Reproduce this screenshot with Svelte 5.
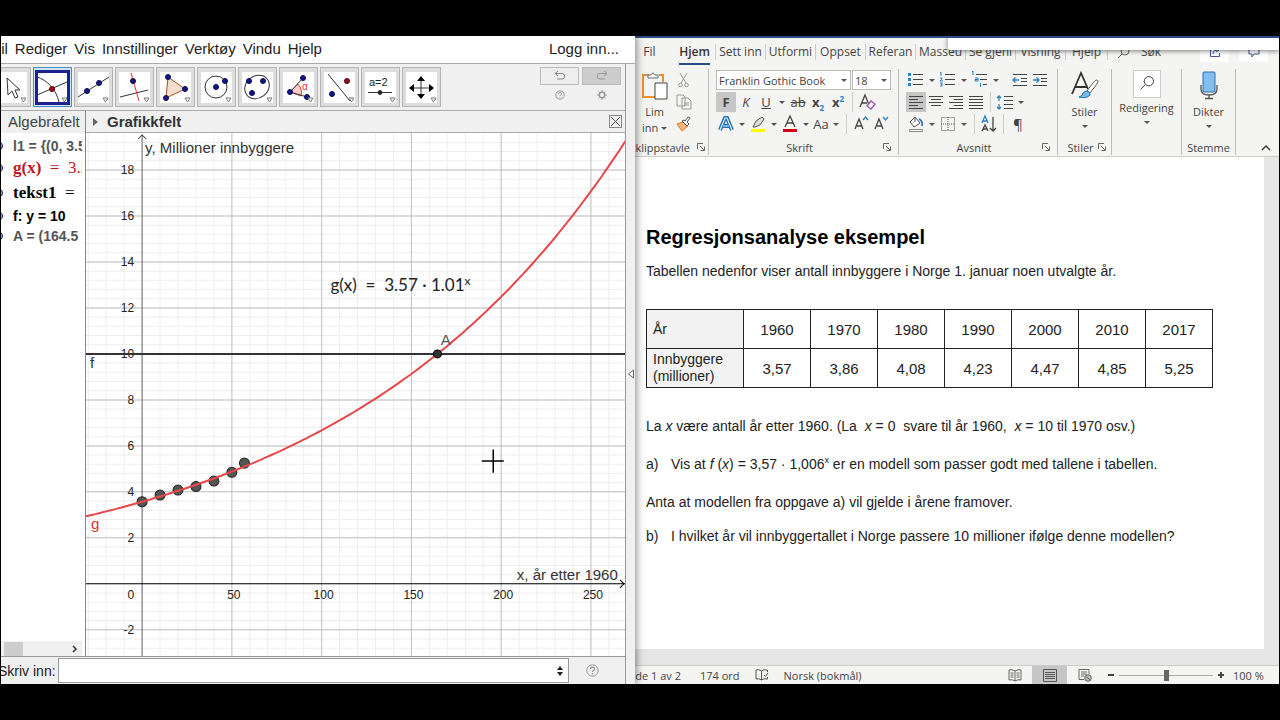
<script>
  const menus = ['Fil', 'Rediger', 'Vis', 'Innstillinger', 'Verktøy', 'Vindu', 'Hjelp']
  const tools = ['move', 'intersect', 'line', 'perpendicular', 'polygon', 'circle', 'ellipse', 'angle', 'reflect', 'slider', 'pan']
  const toolNames = {
    move: 'Flytt', intersect: 'Skjæring', line: 'Linje', perpendicular: 'Normal', polygon: 'Mangekant',
    circle: 'Sirkel', ellipse: 'Ellipse', angle: 'Vinkel', reflect: 'Speil', slider: 'Glider', pan: 'Flytt grafikkfelt',
  }
  let activeTool = $state('intersect')
  let command = $state('')
  let zoom = $state(100)

  // graph
  const W = 538
  const H = 523
  const ox = 56
  const oy = 450
  const px = x => ox + x * 1.792
  const py = y => oy - y * 22.95
  const g = x => 3.57 * Math.exp(0.00626 * x)

  const range = (from, to, step) => {
    const out = []
    for (let i = from; i <= to; i++) out.push(i * step)
    return out
  }
  const minorX = range(-3, 26, 10)
  const minorY = range(-7, 48, 0.4)
  const majorX = [50, 100, 150, 200, 250]
  const majorY = [-2, 2, 4, 6, 8, 10, 12, 14, 16, 18]
  const curve = range(-16, 135, 2).map(x => `${px(x).toFixed(1)},${py(g(x)).toFixed(1)}`).join(' ')

  const population = [
    { year: 1960, value: 3.57 }, { year: 1970, value: 3.86 }, { year: 1980, value: 4.08 },
    { year: 1990, value: 4.23 }, { year: 2000, value: 4.47 }, { year: 2010, value: 4.85 },
    { year: 2017, value: 5.25 },
  ]
  const norsk = n => n.toFixed(2).replace('.', ',')

  const tabs = ['Sett inn', 'Utformi', 'Oppset', 'Referan', 'Masseu', 'Se gjeni', 'Visning', 'Hjelp']
</script>

{#snippet caret()}
  <svg class="caret" width="12" height="20" viewBox="0 0 12 20"><path d="M3 9h6l-3 3z" fill="#555" /></svg>
{/snippet}

{#snippet launcher()}
  <button class="launcher" aria-label="Flere valg">
    <svg width="8" height="8" viewBox="0 0 8 8" fill="none" stroke="#666"><path d="M.5 6V.5H6M3 3l4 4M7.500 3.500v4h-4" /></svg>
  </button>
{/snippet}

{#snippet lines(widths, anchor)}
  <svg width="20" height="20" viewBox="0 0 20 20" stroke="#444" fill="none">
    {#each widths as w, i}
      {@const x = anchor === 'left' ? 3 : anchor === 'right' ? 17 - w : 10 - w / 2}
      <path d="M{x} {4.5 + i * 3}h{w}" />
    {/each}
  </svg>
{/snippet}

<div class="screen">
  <section class="geogebra">
    <nav class="menubar">
      <div class="menus">
        {#each menus as menu}<button>{menu}</button>{/each}
      </div>
      <button>Logg inn...</button>
    </nav>

    <div class="workspace">
      <div class="main">
        <div class="toolbar">
          <div class="tools">
            {#each tools as tool}
              <button class="tool" class:active={activeTool === tool} aria-label={toolNames[tool]} onclick={() => activeTool = tool}>
                <svg viewBox="0 0 31 31" width="31" height="31" fill="none" stroke="#333">
                  {#if tool === 'move'}
                    <path d="M11 6l1 17 4-4 3 7 3-1-3-7h5z" fill="#fff" />
                  {:else if tool === 'intersect'}
                    <path d="M0 5c10 3 19 12 22 25M0 23l30-13" />
                    <circle cx="15" cy="17" r="2.500" fill="#a01020" stroke="#600" />
                  {:else if tool === 'line'}
                    <path d="M0 25L31 5" /><circle cx="9" cy="19" r="2.500" class="dot" /><circle cx="21" cy="11" r="2.500" class="dot" />
                  {:else if tool === 'perpendicular'}
                    <path d="M1 25l28-7" /><path d="M12 1l8 28" stroke="#d33" /><circle cx="14" cy="9" r="2.500" class="dot" />
                  {:else if tool === 'polygon'}
                    <path d="M8 5l-2 21 19-9z" fill="#f3ddcf" stroke="#a0522d" />
                    <circle cx="8" cy="5" r="2.500" class="dot" /><circle cx="6" cy="26" r="2.500" class="dot" /><circle cx="25" cy="17" r="2.500" class="dot" />
                  {:else if tool === 'circle'}
                    <circle cx="15" cy="15" r="11" /><circle cx="15" cy="15" r="2.500" class="dot" /><circle cx="24" cy="9" r="2.500" class="dot" />
                  {:else if tool === 'ellipse'}
                    <ellipse cx="15" cy="15" rx="13" ry="11" transform="rotate(-38 15 15)" />
                    <circle cx="7" cy="9" r="2.500" class="dot" /><circle cx="21" cy="9" r="2.500" class="dot" /><circle cx="10" cy="21" r="2.500" class="dot" />
                  {:else if tool === 'angle'}
                    <path d="M7 20l8-8q5 6 3 12z" fill="#fcc" stroke="#d44" /><path d="M20 6L7 20l17 5" />
                    <text x="19" y="18" class="alpha">α</text>
                    <circle cx="20" cy="6" r="2.500" class="dot" /><circle cx="7" cy="20" r="2.500" class="dot" /><circle cx="24" cy="25" r="2.500" class="dot" />
                  {:else if tool === 'reflect'}
                    <path d="M4 2l22 27" /><circle cx="8" cy="22" r="2.500" class="dot" /><circle cx="23" cy="9" r="2.500" fill="#8b1020" stroke="#501" />
                  {:else if tool === 'slider'}
                    <text x="4" y="14" class="eq">a=2</text><path d="M3 20.500h24" /><circle cx="15" cy="20.500" r="2" fill="#222" />
                  {:else}
                    <path d="M15 6v19M6 16h19" />
                    <path d="M15 4l4 5h-8zM15 27l4-5h-8zM3 16l5-4v8zM28 16l-5-4v8z" fill="#000" stroke="none" />
                  {/if}
                  <path d="M25 26h5l-2.500 4z" fill="#fff" stroke="#777" />
                </svg>
              </button>
            {/each}
          </div>
          <div class="history">
            <button class="undo" aria-label="Angre">
              <svg width="12" height="10" viewBox="0 0 12 10" fill="none" stroke="#888"><path d="M4 0L1 2.500 4 5M1 2.500h7a2.500 2.500 0 010 5.500H3" /></svg>
            </button>
            <button class="undo redo" aria-label="Gjør om">
              <svg width="12" height="10" viewBox="0 0 12 10" fill="none" stroke="#999"><path d="M8 0l3 2.500L8 5M11 2.500H4a2.500 2.500 0 000 5.500h5" /></svg>
            </button>
            <button class="small" aria-label="Hjelp">
              <svg width="10" height="10" viewBox="0 0 10 10" fill="none" stroke="#999"><circle cx="5" cy="5" r="4.200" /><path d="M3.500 4c0-2 3-2 3 0 0 1-1.500 1-1.500 2M5 7v1" /></svg>
            </button>
            <button class="small" aria-label="Innstillinger">
              <svg width="10" height="10" viewBox="0 0 10 10" fill="none" stroke="#999"><circle cx="5" cy="5" r="2.700" stroke-width="1.500" /><path d="M5 0v2M5 8v2M0 5h2M8 5h2M1.500 1.500l1.300 1.300M7.200 7.200l1.300 1.300M1.500 8.500l1.300-1.300M7.200 2.800l1.300-1.300" /></svg>
            </button>
          </div>
        </div>

        <div class="views">
          <div class="algebra">
            <h2>Algebrafelt</h2>
            <ul>
              <li>l1 = &#123;(0, 3.57)</li>
              <li class="tex red">g(x) <span>&nbsp;= &nbsp;3.57</span></li>
              <li class="tex tall">tekst1 <span>&nbsp;=</span></li>
              <li class="black">f: y = 10</li>
              <li>A = (164.5</li>
            </ul>
            <div class="scroll">
              <div class="thumb"></div>
              <svg width="8" height="8" viewBox="0 0 8 8" fill="none" stroke="#333" stroke-width="1.500"><path d="M2 1l3 3-3 3" /></svg>
            </div>
          </div>

          <div class="graphics">
            <header>
              <svg width="5" height="8" viewBox="0 0 5 8"><path d="M0 0l5 4-5 4z" fill="#666" /></svg>
              <h2>Grafikkfelt</h2>
              <button class="close" aria-label="Lukk">
                <svg width="11" height="11" viewBox="0 0 11 11" stroke="#555"><path d="M1 1l9 9M10 1l-9 9" /></svg>
              </button>
            </header>
            <svg class="plot" viewBox="0 0 {W} {H}" preserveAspectRatio="xMinYMin slice">
              {#each minorX as x}<path d="M{px(x)} 0V{H}" stroke="#eee" />{/each}
              {#each minorY as y}<path d="M0 {py(y)}H{W}" stroke="#eee" />{/each}
              {#each majorX as x}<path d="M{px(x)} 0V{H}" stroke="#c4c4c4" />{/each}
              {#each majorY as y}<path d="M0 {py(y)}H{W}" stroke="#c0c0c0" />{/each}

              <path d="M{ox} {H}V2" stroke="#666" />
              <path d="M{ox - 4} 6l4-4 4 4" fill="none" stroke="#444" />
              <path d="M0 {oy}H{W}" stroke="#000" />
              <path d="M{W - 5} {oy - 4}l4 4-4 4" fill="none" stroke="#000" />

              {#each majorX as x}<text class="tick" x={px(x) + 2} y="465" text-anchor="middle">{x}</text>{/each}
              {#each majorY as y}<text class="tick" x="48" y={py(y) + 4} text-anchor="end">{y}</text>{/each}
              <text class="tick" x="48" y="465" text-anchor="end">0</text>

              <path d="M0 {py(10)}H{W}" stroke="#333" stroke-width="2" />
              {#each population as p}
                <circle cx={px(p.year - 1960)} cy={py(p.value)} r="5" fill="#555" stroke="#222" />
              {/each}
              <polyline points={curve} fill="none" stroke="#e8474b" stroke-width="2" />
              <circle cx={px(164.5)} cy={py(10)} r="4" fill="#333" stroke="#000" />

              <text class="name" x="59" y="20">y, Millioner innbyggere</text>
              <text class="name" x="430" y="446">x, år etter 1960</text>
              <text class="name" x="4" y="235">f</text>
              <text class="name light" x="354" y="212">A</text>
              <text class="name g" x="5" y="395">g</text>
              <text class="formula" x="244" y="158">g(x) &nbsp;= &nbsp;3.57 · 1.01<tspan class="sup" dy="-6">x</tspan></text>
              <path d="M395 327.500h22M406.500 316v23" stroke="#000" stroke-width="1.500" />
            </svg>
          </div>
        </div>

        <div class="inputbar">
          <label for="command">Skriv inn:</label>
          <div class="field">
            <input id="command" bind:value={command} />
            <svg width="6" height="12" viewBox="0 0 6 12"><path d="M0 5l3-4 3 4zM0 7l3 4 3-4z" fill="#222" /></svg>
          </div>
          <button class="help" aria-label="Inntastingshjelp">
            <svg width="13" height="13" viewBox="0 0 13 13" fill="none" stroke="#999"><circle cx="6.500" cy="6.500" r="5.700" /><path d="M4.500 5c0-2.500 4-2.500 4 0 0 1.500-2 1.500-2 3M6.500 9v1.500" stroke-width="1.300" /></svg>
          </button>
        </div>
      </div>
      <div class="gutter">
        <svg width="6" height="10" viewBox="0 0 6 10" fill="#fff" stroke="#666"><path d="M5.500 1v8L.5 5z" /></svg>
      </div>
    </div>
  </section>

  <section class="word">
    <div class="floating"></div>
    <nav class="tabs">
      <button class="file">Fil</button>
      <button class="home">Hjem</button>
      {#each tabs as tab}<button class="tab">{tab}</button>{/each}
      <button class="search">
        <svg width="13" height="13" viewBox="0 0 13 13" fill="none" stroke="#666"><circle cx="8" cy="5" r="4" /><path d="M5 8l-4 4" /></svg>
        Søk
      </button>
      <div class="share">
        <button aria-label="Del"><svg width="12" height="12" viewBox="0 0 12 12" fill="none" stroke="#41598f"><path d="M6 3H1.500v7.500h9V7M4 8c0-3 2-4 5-4M7 2l3 2-3 2" /></svg></button>
        <button aria-label="Kommentarer"><svg width="12" height="12" viewBox="0 0 12 12" fill="none" stroke="#41598f"><path d="M1 2h10v6H6l-2 3V8H1z" /></svg></button>
      </div>
    </nav>

    <div class="ribbon">
      <div class="group clipboard">
        <div class="content cols">
          <button class="big paste">
            <svg width="28" height="32" viewBox="0 0 28 32" fill="none">
              <path d="M8 5H2v22h12M18 5h4v7" stroke="#e8912d" stroke-width="2" />
              <path d="M7 8V5h3q2-4 4 0h3v3z" fill="#fff" stroke="#666" />
              <path d="M14 13h12v16H14z" fill="#fff" stroke="#444" />
            </svg>
            <span>Lim<br />inn <svg width="6" height="6" viewBox="0 0 6 6"><path d="M0 1h6L3 4z" fill="#555" /></svg></span>
          </button>
          <div class="stack">
            <button aria-label="Klipp ut"><svg width="20" height="20" viewBox="0 0 20 20" fill="none" stroke="#999"><path d="M6 3l6 10M13 3L7 13" /><circle cx="6.500" cy="15" r="1.800" /><circle cx="12.500" cy="15" r="1.800" /></svg></button>
            <button aria-label="Kopier"><svg width="20" height="20" viewBox="0 0 20 20" fill="#f4f4f2" stroke="#999"><path d="M3 3h6l2 2v9H3zM8 6h6l3 3v8H8zM10 11h5M10 13h5" /></svg></button>
            <button aria-label="Kopier format"><svg width="20" height="20" viewBox="0 0 20 20"><path d="M3 10l5 7 6-5-5-4z" fill="#f3b67c" stroke="#dd7d20" /><path d="M8 7l5 5 2-2-2-2 3-4-2-1-3 4-1-1z" fill="#fff" stroke="#555" /></svg></button>
          </div>
        </div>
        <footer><span class="cut">Utklippstavle</span>{@render launcher()}</footer>
      </div>

      <div class="group">
        <div class="content">
          <div class="combos">
            <div class="combo font"><select aria-label="Skrift"><option>Franklin Gothic Book</option></select>{@render caret()}</div>
            <div class="combo size"><select aria-label="Størrelse"><option>18</option></select>{@render caret()}</div>
          </div>
          <div class="row">
            <button class="on"><b>F</b></button>
            <button><i>K</i></button>
            <button><u>U</u></button>
            {@render caret()}
            <button><s>ab</s></button>
            <button><b>x<sub>2</sub></b></button>
            <button><b>x<sup>2</sup></b></button>
            <span class="sep"></span>
            <button aria-label="Fjern formatering"><svg width="20" height="20" viewBox="0 0 20 20" fill="none" stroke="#444"><path d="M3 15L8 3l4 10M5 11h5" stroke-width="1.300" /><path d="M10 14l4-5 4 3-4 5z" fill="#fff" stroke="#9b4fb5" stroke-width="1.300" /></svg></button>
          </div>
          <div class="row">
            <button aria-label="Teksteffekter"><svg width="20" height="20" viewBox="0 0 20 20"><path d="M4 16L9 4h2l5 12M7 12h6" fill="none" stroke="#2272b8" stroke-width="4" /><path d="M4 16L9 4h2l5 12M7 12h6" fill="none" stroke="#dff0fb" stroke-width="1.200" /></svg></button>
            {@render caret()}
            <button aria-label="Uthevingsfarge"><svg width="20" height="20" viewBox="0 0 20 20"><path d="M5 13l3-6 6-4 2 2-4 6-5 2z" fill="#ddd" stroke="#555" /><path d="M3 15h14v3H3z" fill="#ff0" /></svg></button>
            {@render caret()}
            <button aria-label="Skriftfarge"><svg width="20" height="20" viewBox="0 0 20 20"><path d="M5 13L10 2l5 11M7 9h6" fill="none" stroke="#444" stroke-width="1.300" /><path d="M3 15h14v3H3z" fill="#d00010" /></svg></button>
            {@render caret()}
            <button>Aa</button>
            {@render caret()}
            <span class="sep"></span>
            <button aria-label="Større skrift"><svg width="20" height="20" viewBox="0 0 20 20" fill="none"><path d="M4 15L8 5l4 10M6 12h5" stroke="#444" stroke-width="1.300" /><path d="M12 6l2.500-3L17 6" stroke="#2980c4" stroke-width="1.300" /></svg></button>
            <button aria-label="Mindre skrift"><svg width="20" height="20" viewBox="0 0 20 20" fill="none"><path d="M4 15L8 5l4 10M6 12h5" stroke="#444" stroke-width="1.300" /><path d="M12 3l2.500 3L17 3" stroke="#2980c4" stroke-width="1.300" /></svg></button>
          </div>
        </div>
        <footer><span>Skrift</span>{@render launcher()}</footer>
      </div>

      <div class="group">
        <div class="content">
          <div class="row">
            <button aria-label="Punktmerking"><svg width="20" height="20" viewBox="0 0 20 20"><path d="M7 4.500h10M7 9.500h10M7 14.500h10" stroke="#444" /><path d="M2 3h3v3H2zM2 8h3v3H2zM2 13h3v3H2z" fill="#2980c4" /></svg></button>
            {@render caret()}
            <button aria-label="Nummerering"><svg width="20" height="20" viewBox="0 0 20 20" fill="none"><path d="M7 4.500h10M7 9.500h10M7 14.500h10" stroke="#444" /><path d="M2 3l1-1v4M2 8h2v1l-2 2h3M2 13h2v3H2M3 14.500h1" stroke="#2980c4" /></svg></button>
            {@render caret()}
            <button aria-label="Flernivåliste"><svg width="20" height="20" viewBox="0 0 20 20" fill="none"><path d="M6 4.500h11M10 9.500h7M13 14.500h4" stroke="#444" /><path d="M2 2l1-1v4M5 8h3v3H5v-1.500h3M10.500 13v4" stroke="#2980c4" /></svg></button>
            {@render caret()}
            <span class="sep"></span>
            <button aria-label="Reduser innrykk"><svg width="20" height="20" viewBox="0 0 20 20" fill="none"><path d="M3 4.500h14M11 8.500h6M11 11.500h6M3 15.500h14" stroke="#444" /><path d="M9 10H3M5.500 7.500L3 10l2.500 2.500" stroke="#2980c4" stroke-width="1.300" /></svg></button>
            <button aria-label="Øk innrykk"><svg width="20" height="20" viewBox="0 0 20 20" fill="none"><path d="M3 4.500h14M11 8.500h6M11 11.500h6M3 15.500h14" stroke="#444" /><path d="M3 10h6M6.500 7.500L9 10l-2.500 2.500" stroke="#2980c4" stroke-width="1.300" /></svg></button>
          </div>
          <div class="row">
            <button class="on" aria-label="Venstrejuster">{@render lines([14, 9, 14, 9, 14], 'left')}</button>
            <button aria-label="Midtstill">{@render lines([14, 10, 14, 10], 'center')}</button>
            <button aria-label="Høyrejuster">{@render lines([14, 9, 14, 9, 14], 'right')}</button>
            <button aria-label="Blokkjuster">{@render lines([14, 14, 14, 14, 14], 'left')}</button>
            <span class="sep"></span>
            <button aria-label="Linjeavstand"><svg width="20" height="20" viewBox="0 0 20 20" fill="none"><path d="M9 4.500h9M9 8.500h9M9 12.500h9M9 16.500h9" stroke="#444" /><path d="M4 4v5M2 6l2-2 2 2M4 12v5M2 15l2 2 2-2" stroke="#2980c4" stroke-width="1.300" /></svg></button>
            {@render caret()}
          </div>
          <div class="row">
            <button aria-label="Skyggelegging"><svg width="20" height="20" viewBox="0 0 20 20"><path d="M9 3l5 6-6 4-4-5zM9 3v5" fill="#fff" stroke="#555" /><path d="M13 5q4 2 3 7" fill="none" stroke="#2272b8" stroke-width="1.600" /><path d="M3.500 15.500h13v2h-13z" fill="#fff" stroke="#888" /></svg></button>
            {@render caret()}
            <button aria-label="Kantlinjer"><svg width="20" height="20" viewBox="0 0 20 20" fill="none" stroke="#555" stroke-dasharray="1 1"><path d="M3.500 3.500h13v13h-13zM10 3v14M3 10h14" /></svg></button>
            {@render caret()}
            <span class="sep"></span>
            <button aria-label="Sorter"><svg width="20" height="20" viewBox="0 0 20 20" fill="none" stroke-width="1.300"><path d="M3 9l3-7 3 7M4 7h4" stroke="#2980c4" /><path d="M3 17l3-6 3 6M4 15h4M14 3v14M11 14l3 3 3-3" stroke="#444" /></svg></button>
            <span class="sep"></span>
            <button class="pilcrow">¶</button>
          </div>
        </div>
        <footer><span>Avsnitt</span>{@render launcher()}</footer>
      </div>

      <div class="group styles">
        <div class="content">
          <button class="big">
            <svg width="30" height="32" viewBox="0 0 30 32" fill="none">
              <path d="M2 24L11 3l7 16M5 17h12" stroke="#333" stroke-width="1.800" />
              <path d="M27 10c2 1 1 3-7 13l-3-2c5-7 8-11 10-11z" fill="#fff" stroke="#555" />
              <path d="M17 21q4 1 3 4-3 4-11 2 4-1 4-4 2-2 4-2z" fill="#7ab8e8" stroke="#2272b8" />
            </svg>
            <span>Stiler</span>
          </button>
          {@render caret()}
        </div>
        <footer><span>Stiler</span>{@render launcher()}</footer>
      </div>

      <div class="group editing">
        <div class="content">
          <button class="big">
            <svg class="boxed" width="28" height="28" viewBox="0 0 28 28" fill="none" stroke="#333"><circle cx="16" cy="11" r="5" /><path d="M12 15l-5 5" /></svg>
            <span>Redigering</span>
          </button>
          {@render caret()}
        </div>
      </div>

      <div class="group dictate">
        <div class="content">
          <button class="big">
            <svg width="20" height="32" viewBox="0 0 20 32" fill="none"><path d="M2 15v4q0 6 8 6t8-6v-4M10 25v3M6 28.500h8" stroke="#555" stroke-width="1.300" /><rect x="4" y="2" width="12" height="20" rx="1" fill="#83bdec" stroke="#2272b8" /></svg>
            <span>Dikter</span>
          </button>
          {@render caret()}
        </div>
        <footer><span>Stemme</span></footer>
      </div>

      <button class="collapse" aria-label="Skjul båndet">
        <svg width="10" height="6" viewBox="0 0 10 6" fill="none" stroke="#444" stroke-width="1.500"><path d="M1 5l4-4 4 4" /></svg>
      </button>
    </div>

    <div class="canvas">
      <article>
        <h1>Regresjonsanalyse eksempel</h1>
        <p class="intro">Tabellen nedenfor viser antall innbyggere i Norge 1. januar noen utvalgte år.</p>
        <table>
          <tbody>
            <tr>
              <th>År</th>
              {#each population as p}<td>{p.year}</td>{/each}
            </tr>
            <tr>
              <th>Innbyggere (millioner)</th>
              {#each population as p}<td>{norsk(p.value)}</td>{/each}
            </tr>
          </tbody>
        </table>
        <p>La <i>x</i> være antall år etter 1960. (La &nbsp;<i>x</i> = 0 &nbsp;svare til år 1960, &nbsp;<i>x</i> = 10 til 1970 osv.)</p>
        <p><span class="marker">a)</span>Vis at <i>f</i> (<i>x</i>) = 3,57 · 1,006<sup>x</sup> er en modell som passer godt med tallene i tabellen.</p>
        <p class="close-up">Anta at modellen fra oppgave a) vil gjelde i årene framover.</p>
        <p><span class="marker">b)</span>I hvilket år vil innbyggertallet i Norge passere 10 millioner ifølge denne modellen?</p>
      </article>
    </div>

    <footer class="status">
      <span class="page"><span>Side 1 av 2</span></span>
      <span>174 ord</span>
      <svg width="14" height="13" viewBox="0 0 14 13" fill="none" stroke="#555"><path d="M6.500 2Q4 0 1 1v9q3-1 5.500 1zM6.500 2q2-2 6-1v2M6.500 11q2-2 6-1V8M9 6l1.500 1.500L13 4" /></svg>
      <span class="lang">Norsk (bokmål)</span>
      <div class="modes">
        <button aria-label="Lesemodus"><svg width="14" height="13" viewBox="0 0 14 13" fill="none" stroke="#666"><path d="M7 2Q4 0 1 1v10q3-1 6 1 3-2 6-1V1Q10 0 7 2v10M2.500 4h3M2.500 6h3M2.500 8h3M8.500 4h3M8.500 6h3M8.500 8h3" /></svg></button>
        <button class="on" aria-label="Utskriftsoppsett"><svg width="14" height="13" viewBox="0 0 14 13" fill="none" stroke="#555"><path d="M.5.5h13v12H.5zM2 3.500h10M2 5.500h10M2 7.500h10M2 9.500h10" /></svg></button>
        <button aria-label="Weboppsett"><svg width="14" height="13" viewBox="0 0 14 13" fill="none" stroke="#666"><path d="M11 5V.5H1v10h5M3 3h6M3 5h6M3 7h3" /><circle cx="10" cy="9" r="3.300" fill="#bbb" /><path d="M8 8l2 1 2 2" /></svg></button>
      </div>
      <button class="zoom-step" aria-label="Zoom ut"><svg width="8" height="8" viewBox="0 0 8 8" stroke="#444" stroke-width="2"><path d="M1 4h6" /></svg></button>
      <input type="range" min="0" max="200" bind:value={zoom} aria-label="Zoom" />
      <button class="zoom-step" aria-label="Zoom inn"><svg width="8" height="8" viewBox="0 0 8 8" stroke="#444" stroke-width="2"><path d="M1 4h6M4 1v6" /></svg></button>
      <span class="percent">{zoom} %</span>
    </footer>
  </section>
</div>

<style>
  :global(*) { box-sizing: border-box; }
  :global(body) { margin: 0; background: #000; }
  button { padding: 0; border: none; background: none; color: inherit; font: inherit; cursor: pointer; }
  svg { display: block; flex: none; }
  h1, h2, p, ul { margin: 0; padding: 0; }

  .screen {
    height: 100vh; padding: 36px 1px; overflow: hidden; background: #000;
    display: grid; grid-template-columns: minmax(0, 634fr) minmax(0, 644fr);
  }

  /* GeoGebra */
  .geogebra {
    display: flex; flex-direction: column; min-height: 0; position: relative; z-index: 1;
    font-family: "Liberation Sans", Arial, sans-serif; background: #f0f0f0; color: #222;
    box-shadow: 1px 0 8px rgba(0, 0, 0, 0.5); clip-path: inset(0 -12px 0 0);
  }
  .menubar {
    display: flex; justify-content: space-between; height: 28px; padding-right: 16px; overflow: hidden;
    background: #fff; border-bottom: 1px solid #aaa; font-size: 15px;
  }
  .menus { display: flex; gap: 7px; margin-left: -9px; }
  .menubar button { height: 25px; }
  .workspace { display: flex; flex: 1; min-height: 0; }
  .main { display: flex; flex-direction: column; flex: 1; min-width: 0; }
  .gutter { width: 10px; display: flex; align-items: center; justify-content: center; border-left: 1px solid #999; }

  .toolbar { display: flex; justify-content: space-between; height: 47px; padding: 3px 4px 3px 0; border-bottom: 1px solid #aaa; overflow: hidden; }
  .tools { display: flex; gap: 2px; margin-left: -9px; }
  .tool { width: 39px; height: 40px; padding: 4px; display: flex; align-items: center; justify-content: center; background: #ddd; border: 1px solid #b4b4b4; }
  .tool > svg { background: #fff; }
  .tool.active { background: #cde4f7; border-color: #4a90c8; }
  .tool.active > svg { outline: 3px solid #1c2390; outline-offset: -1px; }
  .dot { fill: #15158a; stroke: #0a0a50; }
  .alpha { font-size: 10px; fill: #d33; stroke: none; }
  .eq { font-size: 11px; fill: #222; stroke: none; }
  .history { display: grid; grid-template-columns: 39px 39px; grid-template-rows: 18px 20px; column-gap: 3px; }
  .history button { display: flex; align-items: center; justify-content: center; }
  .undo { border: 1px solid #bbb; background: #eee; }
  .redo { background: #ccc; }

  .views { display: flex; flex: 1; min-height: 0; border-bottom: 1px solid #999; }
  .algebra { width: 85px; padding-right: 3px; display: flex; flex-direction: column; background: #fff; border-right: 1px solid #888; overflow: hidden; }
  .algebra h2 { height: 22px; padding-left: 7px; margin-right: -3px; font-size: 15px; line-height: 22px; font-weight: 400; color: #444; background: #f0f0f0; }
  .algebra ul { flex: 1; padding-top: 3px; list-style: none; overflow: hidden; }
  .algebra li {
    display: flex; align-items: center; height: 20px; padding-left: 7px;
    font-size: 14px; font-weight: 700; color: #555; white-space: pre; overflow: hidden;
  }
  .algebra li::before { content: ''; flex: none; width: 8px; height: 8px; margin: 0 10px 0 -14px; border: 1px solid #228; border-radius: 50%; background: #99d; }
  .algebra li { padding-left: 6px; }
  .algebra .tex { height: 24px; font-family: "Liberation Serif", serif; font-size: 17px; }
  .tex span { font-weight: 400; }
  .algebra .tall { height: 25px; color: #000; }
  .algebra .red { color: #c4161c; }
  .algebra .black { height: 21px; color: #000; }
  .scroll { display: flex; align-items: center; justify-content: space-between; height: 15px; padding: 0 3px; background: #f0f0f0; }
  .thumb { width: 19px; height: 14px; background: #cdcdcd; }

  .graphics { display: flex; flex-direction: column; flex: 1; min-width: 0; background: #fff; }
  .graphics header { display: flex; align-items: center; gap: 9px; height: 22px; padding: 0 3px 0 7px; background: #f0f0f0; border-bottom: 1px solid #aaa; }
  .graphics h2 { flex: 1; font-size: 15px; color: #333; }
  .close { width: 13px; height: 13px; display: flex; align-items: center; justify-content: center; border: 1px solid #888; }
  .plot { width: 100%; height: 100%; min-height: 0; flex: 1; }
  .tick { font-size: 12px; fill: #222; }
  .name { font-size: 15px; fill: #333; }
  .light { fill: #555; }
  .g { fill: #d33; }
  .formula { font-family: Lato, sans-serif; font-size: 17px; fill: #222; }
  .sup { font-size: 12px; }

  .inputbar { display: flex; align-items: center; height: 27px; }
  .inputbar label { margin-left: -3px; width: 60px; font-size: 14px; white-space: nowrap; }
  .field { display: flex; align-items: center; flex: 1; height: 25px; padding-right: 5px; background: #fff; border: 1px solid #999; }
  .field input { flex: 1; min-width: 0; border: none; outline: none; font-size: 15px; }
  .help { width: 56px; padding-left: 17px; }

  /* Word */
  .word {
    position: relative; display: flex; flex-direction: column; min-height: 0; overflow: hidden;
    font-family: "Open Sans", "Noto Sans", sans-serif; font-size: 12px; color: #444; background: #f4f4f2;
    border-top: 2px solid #2b4a86;
  }
  .floating { position: absolute; z-index: 2; top: -2px; right: 0; width: 331px; height: 14px; background: #fff; border-radius: 0 0 0 3px; box-shadow: 0 1px 5px rgba(0, 0, 0, 0.5); }
  .tabs { display: flex; align-items: center; height: 28px; white-space: nowrap; }
  .tabs > button { height: 16px; line-height: 16px; }
  .file { width: 29px; }
  .home { position: relative; width: 51px; padding-left: 10px; color: #333; font-weight: 600; }
  .home::after { content: ''; position: absolute; left: 15px; right: 5px; bottom: -5px; height: 2px; background: #2b4a86; }
  .tab { width: 50px; border-left: 1px solid #ccc; }
  .tab:nth-last-child(3) { width: 42px; }
  .tabs .search { display: flex; align-items: center; gap: 11px; padding-left: 9px; border-left: 1px solid #ccc; }
  .share { display: flex; gap: 10px; margin: 0 11px 0 auto; }
  .share button { width: 29px; height: 20px; display: flex; align-items: center; justify-content: center; background: #fff; }

  .ribbon { display: flex; height: 91px; padding-top: 3px; border-bottom: 1px solid #ccc; }
  .group { display: flex; flex-direction: column; height: 86px; padding: 0 7px; border-right: 1px solid #bbb; }
  .content { display: flex; flex-direction: column; flex: 1; min-height: 0; gap: 2px; padding-top: 1px; }
  .content.cols { flex-direction: row; gap: 3px; }
  .clipboard { width: 74px; padding: 0 3px; }
  .stack { display: flex; flex-direction: column; gap: 2px; }
  .group footer { display: flex; align-items: center; justify-content: center; height: 16px; font-size: 11px; white-space: nowrap; }
  .group footer span { flex: 1; text-align: center; }
  .group footer .cut { display: flex; justify-content: flex-end; overflow: hidden; margin-left: -3px; padding-right: 7px; }
  .launcher { width: 8px; flex: none; }
  .group:nth-child(2) { width: 190px; }
  .group:nth-child(3) { width: 159px; }
  .combos { display: flex; gap: 1px; }
  .combo { display: flex; align-items: center; height: 20px; background: #fff; border: 1px solid #bbb; }
  .combo select { flex: 1; min-width: 0; padding: 0 2px; border: none; background: none; color: #444; font: inherit; font-size: 11px; appearance: none; }
  .combo.font { width: 135px; }
  .combo.size { width: 39px; }
  .row { display: flex; align-items: center; height: 20px; }
  .row button { width: 20px; height: 20px; font-size: 13px; line-height: 20px; text-align: center; }
  .row sub, .row sup { font-size: 8px; line-height: 1px; color: #2980c4; }
  .on { background: #c6c6c6; }
  .sep { width: 1px; height: 20px; margin: 0 4px; background: #ccc; }
  .row .pilcrow { font-size: 15px; }

  .big { display: flex; flex-direction: column; align-items: center; width: 100%; gap: 2px; font-size: 11px; line-height: 16px; }
  .paste { width: 33px; }
  .paste span svg { display: inline-block; }
  .styles, .editing, .dictate { padding: 0 5px; }
  .styles { width: 54px; }
  .editing { width: 70px; padding: 0; }
  .dictate { width: 54px; }
  .styles .content, .editing .content, .dictate .content { align-items: center; gap: 0; }
  .content > .caret { margin-top: -4px; }
  .boxed { background: #fff; border: 1px solid #ccc; }
  .collapse { display: flex; align-items: flex-end; margin-left: auto; padding: 0 8px 5px; }

  .canvas { flex: 1; min-height: 0; display: flex; padding: 0 15px 16px 0; background: #e6e6e6; }
  article {
    flex: 1; padding: 66px 20px 0 11px; overflow: hidden; background: #fff; color: #222;
    font-family: "Liberation Sans", Arial, sans-serif; font-size: 14px; line-height: 20px;
  }
  h1 { margin-bottom: 10px; font-size: 20px; line-height: 28px; color: #000; }
  article p { margin-bottom: 18px; white-space: nowrap; }
  article .intro { margin-bottom: 28px; }
  article .close-up { margin-bottom: 14px; }
  table { width: 567px; margin-bottom: 28px; border-collapse: collapse; table-layout: fixed; font-size: 15px; line-height: 17px; }
  th, td { height: 39px; padding: 0; border: 1px solid #222; text-align: center; font-weight: 400; }
  th { width: 97px; padding: 0 6px; text-align: left; font-size: 14px; background: #f2f2f2; }
  article sup { font-size: 9px; line-height: 1px; }
  .marker { display: inline-block; width: 25px; }

  .status { display: flex; align-items: center; height: 19px; border-top: 1px solid #ccc; font-size: 11px; white-space: nowrap; }
  .page { display: flex; justify-content: flex-end; width: 46px; margin-right: 19px; overflow: hidden; }
  .status > svg { margin-left: 15px; }
  .lang { margin-left: 15px; }
  .modes { display: flex; height: 100%; margin-left: auto; }
  .modes button { width: 35px; display: flex; align-items: center; justify-content: center; }
  .zoom-step { width: 16px; height: 16px; display: flex; align-items: center; justify-content: center; }
  .modes + .zoom-step { margin-left: 1px; }
  input[type="range"] { width: 94px; height: 12px; margin: 0; appearance: none; background: linear-gradient(#aaa, #aaa) center / 100% 1px no-repeat; }
  input[type="range"]::-webkit-slider-thumb { appearance: none; width: 5px; height: 11px; background: #666; }
  .percent { width: 50px; padding-left: 4px; }
</style>
